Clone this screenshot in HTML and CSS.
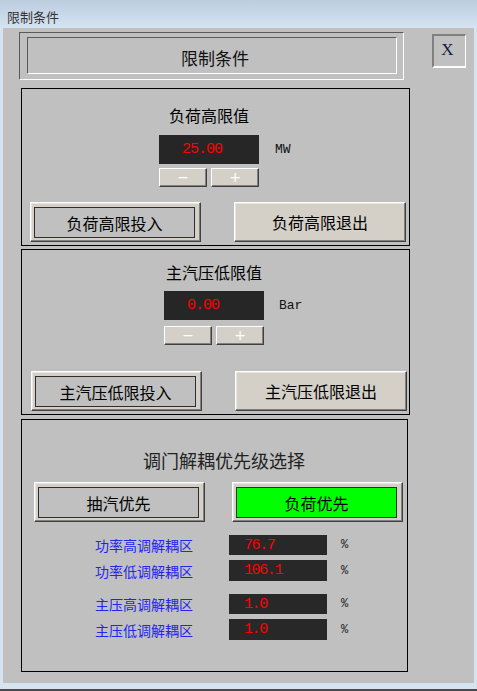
FILE: index.html
```html
<!DOCTYPE html>
<html lang="zh-CN">
<head>
<meta charset="utf-8">
<title>限制条件</title>
<link rel="stylesheet" href="styles.css">
</head>
<body>
<div class="win">
  <div class="titlebar">限制条件</div>
  <div class="client">
    <div class="head">
      <div class="hframe"><div class="hinner">限制条件</div></div>
      <div class="xbtn">X</div>
    </div>

    <div class="panel p1">
      <div class="ctl c1">
        <div class="ptitle">负荷高限值</div>
        <div class="vrow v1">
          <div class="val">25.00</div>
          <div class="unit u1">MW</div>
        </div>
        <div class="pm p1pm">
          <div class="pmb">−</div>
          <div class="pmb">+</div>
        </div>
      </div>
      <div class="brow br1">
        <div class="btn sel w171"><div class="in">负荷高限投入</div></div>
        <div class="btn w172">负荷高限退出</div>
      </div>
    </div>

    <div class="panel p2">
      <div class="ctl c2">
        <div class="ptitle">主汽压低限值</div>
        <div class="vrow v2">
          <div class="val">0.00</div>
          <div class="unit u2">Bar</div>
        </div>
        <div class="pm p2pm">
          <div class="pmb">−</div>
          <div class="pmb">+</div>
        </div>
      </div>
      <div class="brow br2">
        <div class="btn sel w171"><div class="in">主汽压低限投入</div></div>
        <div class="btn w172">主汽压低限退出</div>
      </div>
    </div>

    <div class="panel p3">
      <div class="t3">调门解耦优先级选择</div>
      <div class="brow br3">
        <div class="btn sel w171"><div class="in">抽汽优先</div></div>
        <div class="btn sel green w171"><div class="in">负荷优先</div></div>
      </div>
      <div class="rows">
        <div class="row r1"><div class="lbl">功率高调解耦区</div><div class="rv">76.7</div><div class="pct">%</div></div>
        <div class="row r2"><div class="lbl">功率低调解耦区</div><div class="rv">106.1</div><div class="pct">%</div></div>
        <div class="row r3"><div class="lbl">主压高调解耦区</div><div class="rv">1.0</div><div class="pct">%</div></div>
        <div class="row r4"><div class="lbl">主压低调解耦区</div><div class="rv">1.0</div><div class="pct">%</div></div>
      </div>
    </div>
  </div>
</div>
</body>
</html>
```
FILE: styles.css
```css
* { box-sizing: border-box; }
html, body { margin: 0; padding: 0; }
body {
  width: 477px;
  height: 691px;
  overflow: hidden;
  background: #d6e3f1;
  font-family: "Noto Sans CJK SC", sans-serif;
  color: #000;
}
.win {
  width: 477px;
  height: 691px;
  background: #d6e3f1;
  border-bottom: 2px solid #4a4a4a;
  display: flex;
  flex-direction: column;
}
.titlebar {
  height: 28px;
  flex: none;
  background: linear-gradient(#bccde0, #d5e3f1);
  font-size: 13px;
  color: #333;
  padding: 4px 0 0 7px;
  line-height: 25px;
}
.client {
  margin: 0 3px;
  height: 655px;
  flex: none;
  background: #c0c0c0;
  padding-top: 4px;
}
.head {
  display: flex;
  align-items: flex-start;
  margin-left: 16px;
}
.hframe {
  width: 385px;
  height: 48px;
  border: 1px solid;
  border-color: #5a5a5a #fff #fff #5a5a5a;
  padding: 4px 6px 5px 7px;
}
.hinner {
  height: 100%;
  border: 1px solid;
  border-color: #5a5a5a #fff #fff #5a5a5a;
  display: flex;
  align-items: center;
  justify-content: center;
  font-size: 17px;
  padding: 3px 0 0 6px;
  color: #111;
}
.xbtn {
  margin-left: 28px;
  margin-top: 2px;
  width: 34px;
  height: 34px;
  border-style: solid;
  border-width: 2px 1px 2px 2px;
  border-color: #808080 #fff #fff #808080;
  font-family: "Liberation Serif", serif;
  font-size: 17px;
  display: flex;
  align-items: center;
  justify-content: center;
  padding: 0 4px 3px 0;
  color: #1a1a40;
}
.panel {
  margin-left: 18px;
  border: 1px solid #000;
  width: 389px;
}
.p1 { margin-top: 8px; height: 158px; }
.p2 { margin-top: 3px; height: 166px; }
.p3 { margin-top: 4px; height: 253px; width: 387px; }

.c1 { margin-left: 137px; }
.c2 { margin-left: 142px; }
.ptitle {
  width: 100px;
  font-size: 16px;
  line-height: 20px;
  text-align: center;
  white-space: nowrap;
  display: flex;
  justify-content: center;
}
.c1 .ptitle { margin-top: 16px; }
.c2 .ptitle { margin-top: 12px; }
.vrow { display: flex; align-items: center; }
.v1 { margin-top: 10px; }
.v2 { margin-top: 9px; }
.val {
  flex: none;
  width: 100px;
  height: 29px;
  background: #262626;
  color: #ff0000;
  font-family: "Liberation Mono", monospace;
  font-size: 15px;
  letter-spacing: -1px;
  line-height: 29px;
  padding-left: 23px;
}
.unit {
  font-family: "Liberation Mono", monospace;
  font-size: 13px;
  white-space: nowrap;
  color: #111;
}
.u1 { margin-left: 16px; }
.u2 { margin-left: 15px; }
.pm { display: flex; gap: 4px; width: 100px; }
.p1pm { margin-top: 4px; }
.p2pm { margin-top: 6px; }
.pmb {
  flex: 1;
  height: 19px;
  background: #d4d0c8;
  border: 1px solid;
  border-color: #fff #404040 #404040 #fff;
  box-shadow: inset -1px -1px #808080;
  color: #fff;
  font-family: "DejaVu Sans", sans-serif;
  font-size: 14px;
  line-height: 16px;
  text-align: center;
}

.brow { display: flex; }
.br1 { margin: 15px 0 0 8px; gap: 33px; }
.br2 { margin: 26px 0 0 9px; gap: 33px; }
.br3 { margin: 11px 0 0 12px; gap: 27px; }
.btn {
  height: 40px;
  background: #d4d0c8;
  border: 1px solid;
  border-color: #fff #404040 #404040 #fff;
  box-shadow: inset -1px -1px #808080, inset 1px 1px #e8e6e0;
  display: flex;
  align-items: center;
  justify-content: center;
  font-size: 16px;
  white-space: nowrap;
  color: #000;
}
.w171 { width: 171px; }
.w172 { width: 172px; }
.btn.sel {
  padding: 4px 5px 3px 3px;
  align-items: stretch;
}
.btn .in {
  flex: 1;
  border: 1px solid #2e2e2e;
  background: #c0c0c0;
  display: flex;
  align-items: center;
  justify-content: center;
}
.btn.green .in { background: #00ff00; }

.t3 {
  margin-top: 29px;
  padding-left: 121px;
  font-size: 18px;
  line-height: 22px;
  color: #222;
  white-space: nowrap;
}
.rows { margin-top: 13px; }
.row { display: flex; align-items: center; }
.r1 { height: 20px; }
.r2 { height: 21px; margin-top: 5px; }
.r3 { height: 20px; margin-top: 13px; }
.r4 { height: 21px; margin-top: 5px; }
.lbl {
  width: 171px;
  text-align: right;
  font-size: 14px;
  line-height: 18px;
  color: #2424f0;
  white-space: nowrap;
}
.rv {
  margin-left: 36px;
  width: 98px;
  height: 100%;
  background: #282828;
  color: #ff0000;
  font-family: "Liberation Mono", monospace;
  font-size: 15px;
  letter-spacing: -1.4px;
  display: flex;
  align-items: center;
  padding-left: 15px;
}
.pct {
  margin-left: 14px;
  font-family: "Liberation Mono", monospace;
  font-size: 12px;
  color: #222;
}
```
